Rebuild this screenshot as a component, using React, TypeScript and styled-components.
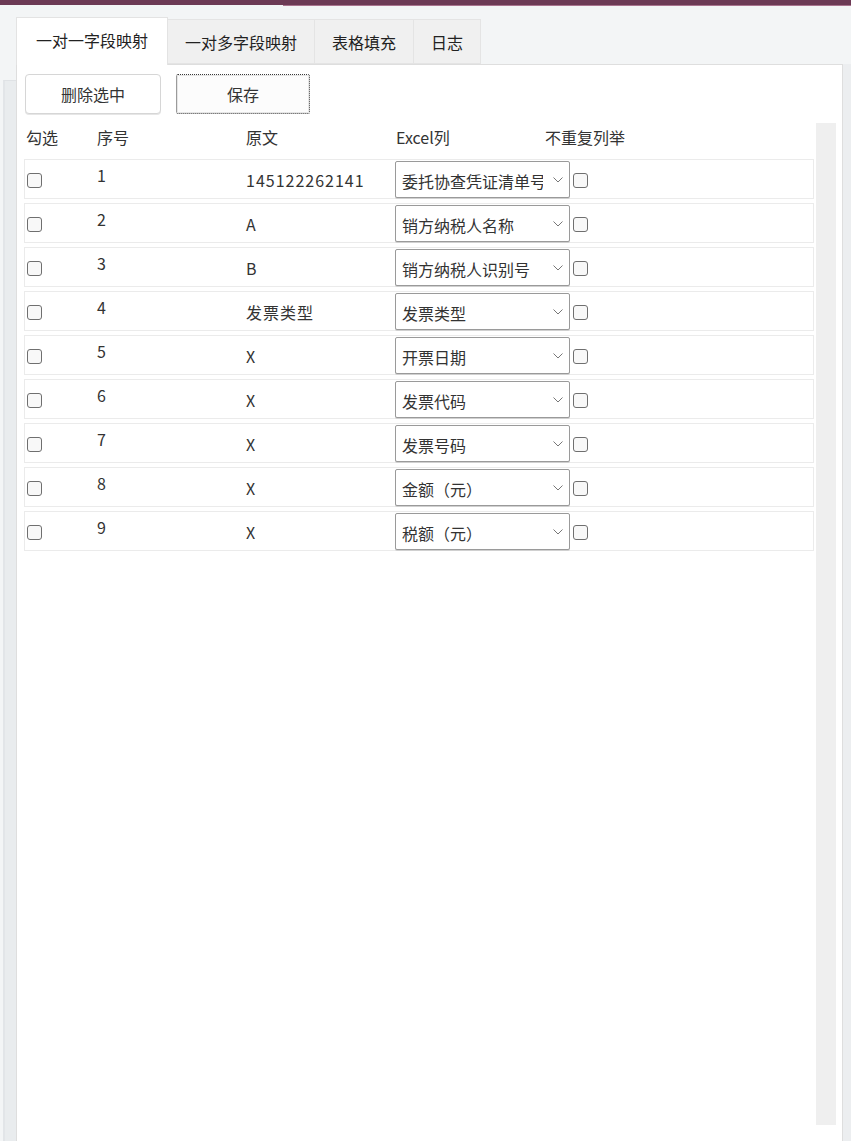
import React from "react";
import styled, { createGlobalStyle } from "styled-components";

const GlobalStyle = createGlobalStyle`
  html, body { margin: 0; padding: 0; }
  body {
    background: #f3f5f6;
    font-family: "Noto Sans CJK SC", "Noto Sans", sans-serif;
    color: #333;
  }
  * { box-sizing: border-box; }
`;

const Page = styled.div`
  width: 851px;
  height: 1141px;
  display: flex;
  flex-direction: column;
  overflow: hidden;
`;

const TopBar = styled.div`
  display: flex;
  align-items: flex-start;
  flex: 0 0 6px;
`;

const BarSegment = styled.div<{ $wide?: boolean }>`
  background: #6c3a55;
  height: ${(p) => (p.$wide ? "6px" : "5px")};
  flex: ${(p) => (p.$wide ? "1" : "0 0 283px")};
  border-bottom: ${(p) => (p.$wide ? "1px solid #a9738e" : "none")};
`;

const Main = styled.div`
  flex: 1;
  display: flex;
  min-height: 0;
`;

const LeftGutter = styled.div`
  width: 16px;
  display: flex;
  flex-direction: column;
  padding-top: 74px;
`;

const GutterPane = styled.div`
  flex: 1;
  margin-left: 3px;
  border-top: 1px solid #dfe2e5;
  border-left: 2px solid #e2e5e8;
  background: #e9ecee;
`;

const RightGutter = styled.div`
  width: 8px;
  background: #eceef0;
  margin-top: 58px;
`;

const Window = styled.div`
  flex: 1;
  display: flex;
  flex-direction: column;
  padding-top: 11px;
  min-width: 0;
`;

const TabStrip = styled.div`
  display: flex;
  align-items: flex-end;
  height: 47px;
`;

const Tab = styled.div<{ $active?: boolean }>`
  position: relative;
  z-index: ${(p) => (p.$active ? 2 : 1)};
  height: ${(p) => (p.$active ? "48px" : "45px")};
  margin-bottom: ${(p) => (p.$active ? "-1px" : "0")};
  padding: ${(p) => (p.$active ? "0 19px 2px" : "2px 17px 0")};
  display: flex;
  align-items: center;
  justify-content: center;
  font-size: 16px;
  line-height: 21px;
  color: #222;
  background: ${(p) => (p.$active ? "#ffffff" : "#f0f0f0")};
  border: 1px solid ${(p) => (p.$active ? "#e3e3e3" : "#e4e4e4")};
  border-bottom: ${(p) => (p.$active ? "none" : "1px solid #e4e4e4")};
  margin-left: ${(p) => (p.$active ? "0" : "-1px")};
  white-space: nowrap;
`;

const Panel = styled.div`
  flex: 1;
  background: #ffffff;
  border: 1px solid #dedede;
  border-bottom: none;
  display: flex;
  flex-direction: column;
  min-height: 0;
`;

const Toolbar = styled.div`
  display: flex;
  gap: 15px;
  padding: 9px 0 9px 8px;
`;

const Button = styled.button<{ $focused?: boolean }>`
  width: ${(p) => (p.$focused ? "134px" : "136px")};
  height: 40px;
  font-family: inherit;
  font-size: 16px;
  line-height: 21px;
  color: #333;
  background: ${(p) => (p.$focused ? "#fcfcfc" : "#ffffff")};
  border: ${(p) => (p.$focused ? "1px dotted #3a3a3a" : "1px solid #d6d6d6")};
  border-radius: ${(p) => (p.$focused ? "2px" : "4px")};
  box-shadow: ${(p) => (p.$focused ? "inset 0 0 0 1px #e6e6e6" : "0 1px 0 #e6e6e6")};
  padding: 0;
  cursor: default;
`;

const Body = styled.div`
  flex: 1;
  display: flex;
  gap: 2px;
  padding: 0 6px 16px 7px;
  min-height: 0;
`;

const Table = styled.div`
  width: 790px;
  display: flex;
  flex-direction: column;
`;

const ScrollTrack = styled.div`
  width: 20px;
  background: #efefef;
`;

const HeaderRow = styled.div`
  display: grid;
  grid-template-columns: 71px 149px 150px 149px auto;
  align-items: center;
  height: 36px;
  padding: 0 0 7px 2px;
  font-size: 16px;
  line-height: 21px;
  color: #333;
`;

const Row = styled.div`
  display: grid;
  grid-template-columns: 70px 149px 149px 175px auto;
  height: 40px;
  padding-left: 2px;
  border: 1px solid #ebebeb;
  margin-bottom: 4px;
  font-size: 16px;
  line-height: 21px;
  color: #333;
`;

const Check = styled.span<{ $gap?: boolean }>`
  align-self: center;
  display: block;
  width: 15px;
  height: 15px;
  margin-left: ${(p) => (p.$gap ? "3px" : "0")};
  margin-top: 2px;
  border: 1px solid #6f6f6f;
  border-radius: 3px;
  background: #f8f8f8;
`;

const Seq = styled.div`
  align-self: start;
  padding-top: 5px;
`;

const Source = styled.div`
  align-self: center;
  padding-top: 3px;
  white-space: nowrap;
  letter-spacing: 1px;
`;

const Select = styled.div`
  align-self: center;
  margin-top: 1px;
  height: 37px;
  display: flex;
  align-items: center;
  border: 1px solid #9a9a9a;
  border-radius: 2px;
  background: #fff;
  padding-left: 6px;
  box-shadow: 0 1px 0 #d0d0d0;
`;

const SelectText = styled.span`
  flex: 1;
  overflow: hidden;
  white-space: nowrap;
  padding-top: 3px;
`;

const Chevron = styled.svg`
  flex: 0 0 10px;
  margin: 0 6px 0 10px;
`;

const rows = [
  { n: 1, src: "145122262141", col: "委托协查凭证清单号" },
  { n: 2, src: "A", col: "销方纳税人名称" },
  { n: 3, src: "B", col: "销方纳税人识别号" },
  { n: 4, src: "发票类型", col: "发票类型" },
  { n: 5, src: "X", col: "开票日期" },
  { n: 6, src: "X", col: "发票代码" },
  { n: 7, src: "X", col: "发票号码" },
  { n: 8, src: "X", col: "金额（元）" },
  { n: 9, src: "X", col: "税额（元）" },
];

export default function App() {
  return (
    <Page>
      <GlobalStyle />
      <TopBar>
        <BarSegment />
        <BarSegment $wide />
      </TopBar>
      <Main>
        <LeftGutter>
          <GutterPane />
        </LeftGutter>
        <Window>
          <TabStrip>
            <Tab $active>一对一字段映射</Tab>
            <Tab>一对多字段映射</Tab>
            <Tab>表格填充</Tab>
            <Tab>日志</Tab>
          </TabStrip>
          <Panel>
            <Toolbar>
              <Button>删除选中</Button>
              <Button $focused>保存</Button>
            </Toolbar>
            <Body>
              <Table>
                <HeaderRow>
                  <span>勾选</span>
                  <span>序号</span>
                  <span>原文</span>
                  <span>Excel列</span>
                  <span>不重复列举</span>
                </HeaderRow>
                {rows.map((r) => (
                  <Row key={r.n}>
                    <Check />
                    <Seq>{r.n}</Seq>
                    <Source>{r.src}</Source>
                    <Select>
                      <SelectText>{r.col}</SelectText>
                      <Chevron width="10" height="6" viewBox="0 0 10 6">
                        <path d="M0.5 0.5 L5 5 L9.5 0.5" fill="none" stroke="#777" strokeWidth="1" />
                      </Chevron>
                    </Select>
                    <Check $gap />
                  </Row>
                ))}
              </Table>
              <ScrollTrack />
            </Body>
          </Panel>
        </Window>
        <RightGutter />
      </Main>
    </Page>
  );
}
